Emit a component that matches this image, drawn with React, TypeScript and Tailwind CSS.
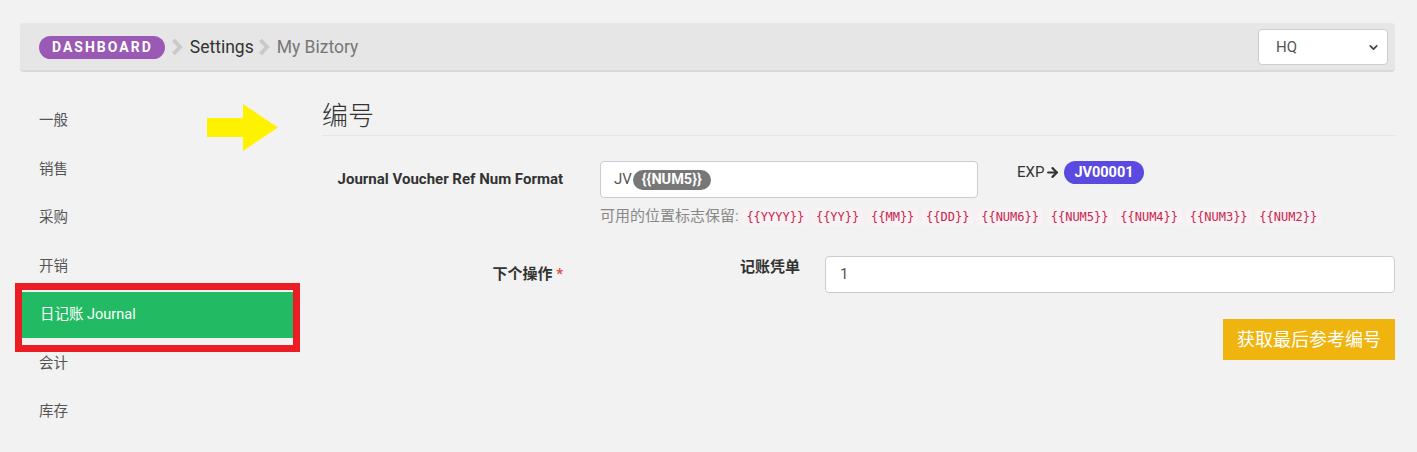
import React from 'react';
import { ChevronDown, ArrowRight } from 'lucide-react';

const menu = ['一般', '销售', '采购', '开销', '日记账 Journal', '会计', '库存'];
const tokens = ['{{YYYY}}', '{{YY}}', '{{MM}}', '{{DD}}', '{{NUM6}}', '{{NUM5}}', '{{NUM4}}', '{{NUM3}}', '{{NUM2}}'];

function Crumb() {
  return (
    <svg width="12" height="18" viewBox="0 0 12 18" className="shrink-0">
      <polyline points="2.5,2 9,9 2.5,16" fill="none" stroke="#c9c9c9" strokeWidth="4" />
    </svg>
  );
}

export default function App() {
  return (
    <div
      className="min-h-screen bg-[#f2f2f2] pl-[20px] pr-[22px] pt-[23px] text-[#333]"
      style={{ fontFamily: 'Roboto, "Noto Sans CJK SC", sans-serif' }}
    >
      {/* breadcrumb bar */}
      <div className="flex h-[49px] items-start justify-between rounded-[4px] border-b-2 border-[#d9d9d9] bg-[#e6e6e6] pl-[19px] pr-[7px]">
        <div className="mt-[11px] flex items-center">
          <span className="flex h-[23px] items-center rounded-full bg-[#9b59b6] pl-[13px] pr-[12px] text-[14px] font-bold tracking-[2px] text-white">
            DASHBOARD
          </span>
          <span className="ml-[6px] mr-[7px]"><Crumb /></span>
          <span className="text-[17.5px] text-[#333]">Settings</span>
          <span className="ml-[4px] mr-[7px]"><Crumb /></span>
          <span className="text-[17.5px] text-[#777]">My Biztory</span>
        </div>
        <div className="relative mt-[6px] w-[130px]">
          <select className="h-[36px] w-full appearance-none rounded-[4px] border border-[#ccc] bg-white pl-[17px] text-[15px] text-[#555] outline-none">
            <option>HQ</option>
          </select>
          <ChevronDown size={13} strokeWidth={3.2} className="pointer-events-none absolute right-[8px] top-[12px] text-[#444]" />
        </div>
      </div>

      <div className="mt-[25px] flex">
        {/* sidebar */}
        <div className="relative ml-[2px] w-[271px] shrink-0">
          {menu.map((m, i) =>
            i === 4 ? (
              <div key={m} className="relative h-[48.5px] pt-[1px]">
                <div className="flex h-[46px] items-center bg-[#22bb63] pl-[18px] text-[14.5px] text-white">{m}</div>
                <div className="pointer-events-none absolute -bottom-[12.5px] -left-[7px] -right-[7px] -top-[8px] border-[7px] border-[#ec1c24]" />
              </div>
            ) : (
              <div key={m} className="flex h-[48.5px] items-center pl-[17px] text-[14.5px] text-[#555]">{m}</div>
            )
          )}
          <svg width="71" height="47" viewBox="0 0 71 47" className="pointer-events-none absolute left-[185px] top-[7px]">
            <polygon points="0,14 36,14 36,0 71,23.5 36,47 36,33 0,33" fill="#fff200" />
          </svg>
        </div>

        {/* content */}
        <div className="-mt-[1px] ml-[29px] min-w-0 flex-1">
          <div className="border-b border-[#e5e5e5] pt-[2px] text-[26px] font-light leading-[37px] text-[#333]">编号</div>

          <div className="mt-[25px] flex items-start">
            <div className="w-[241px] shrink-0 pt-[8px] text-right text-[15px] font-bold leading-[20px] text-[#333]">
              Journal Voucher Ref Num Format
            </div>
            <div className="ml-[37px] w-[378px] shrink-0">
              <div className="flex h-[37px] w-[378px] items-center rounded-[4px] border border-[#ccc] bg-white pl-[13px] text-[15px] text-[#555]">
                JV
                <span className="ml-[1px] flex h-[20px] items-center rounded-full bg-[#777] px-[9px] text-[14.5px] font-bold text-white">
                  {'{{NUM5}}'}
                </span>
              </div>
              <div className="mt-[8px] whitespace-nowrap text-[15px] leading-[20px] text-[#888]">
                可用的位置标志保留:{' '}
                {tokens.map((t) => (
                  <React.Fragment key={t}>
                    <code
                      className="rounded-[4px] bg-[#f9f2f4] px-[4px] py-[2px] text-[12px] text-[#c7254e]"
                      style={{ fontFamily: '"DejaVu Sans Mono", monospace' }}
                    >
                      {t}
                    </code>{' '}
                  </React.Fragment>
                ))}
              </div>
            </div>
            <div className="ml-[39px] flex items-center">
              <span className="text-[15px] text-[#333]">EXP</span>
              <ArrowRight size={15} strokeWidth={3.5} className="ml-[1px] text-[#333]" />
              <span className="ml-[4px] flex h-[23px] items-center rounded-full bg-[#5b4ae0] px-[10px] text-[14.5px] font-bold text-white">
                JV00001
              </span>
            </div>
          </div>

          <div className="mt-[29px] flex items-start">
            <div className="w-[241px] shrink-0 pt-[8px] text-right text-[15px] font-bold leading-[20px] text-[#333]">
              下个操作 <span className="text-[#e74c3c]">*</span>
            </div>
            <div className="ml-[37px] w-[200px] shrink-0 pt-[1px] text-right text-[15px] font-bold leading-[20px] text-[#333]">记账凭单</div>
            <div className="ml-[25px] flex h-[37px] min-w-0 flex-1 items-center rounded-[4px] border border-[#ccc] bg-white pl-[14px] text-[15px] text-[#555]">
              1
            </div>
          </div>

          <div className="mt-[26px] flex justify-end">
            <button className="h-[41px] bg-[#f0b40f] px-[14px] text-[18px] text-white">获取最后参考编号</button>
          </div>
        </div>
      </div>
    </div>
  );
}
